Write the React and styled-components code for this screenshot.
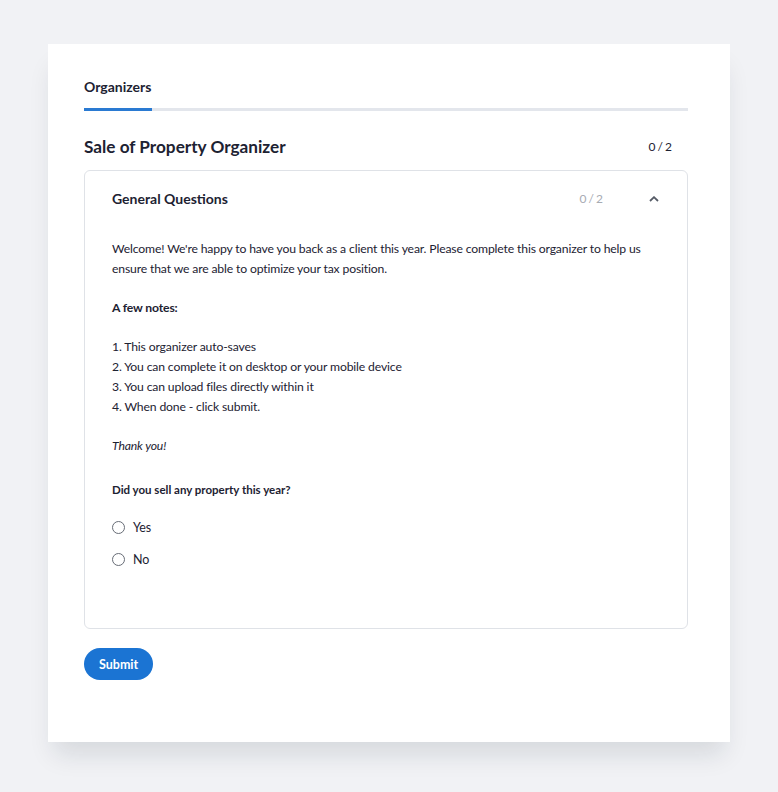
import React, { useState } from "react";
import styled, { createGlobalStyle } from "styled-components";

const Global = createGlobalStyle`
  body {
    margin: 0;
    background: #f1f2f5;
    font-family: "Lato", "Noto Sans", sans-serif;
    color: #1d2232;
  }
`;

const Page = styled.div`
  padding: 44px 48px 51px 48px;
`;

const Sheet = styled.div`
  background: #fff;
  padding: 34px 42px 62px 36px;
  box-shadow: 0 18px 24px -6px rgba(20, 30, 50, 0.12);
`;

const Tabs = styled.div`
  display: flex;
  border-bottom: 3px solid #e3e6ec;
`;

const Tab = styled.div`
  font-size: 14px;
  font-weight: 700;
  padding: 0 0 13px;
  width: 68px;
  margin-bottom: -3px;
  border-bottom: 3px solid ${(p) => (p.active ? "#2a7ad2" : "transparent")};
`;

const TitleRow = styled.div`
  display: flex;
  align-items: center;
  justify-content: space-between;
  margin-top: 25px;
  padding-right: 16px;
`;

const Title = styled.h1`
  margin: 0;
  font-size: 17.2px;
  font-weight: 700;
`;

const Count = styled.span`
  font-size: 12px;
  color: ${(p) => (p.muted ? "#a7abb3" : "#1d2232")};
  word-spacing: -1px;
`;

const Panel = styled.div`
  margin-top: 13px;
  border: 1px solid #dfe2e7;
  border-radius: 6px;
  padding: 0 28px 59px 27px;
`;

const PanelHead = styled.div`
  display: flex;
  align-items: center;
  height: 55px;
`;

const PanelTitle = styled.div`
  flex: 1;
  font-size: 14px;
  font-weight: 700;
`;

const Chevron = styled.span`
  display: inline-flex;
  margin-left: 46px;
  color: #555b66;
`;

const Body = styled.div`
  font-size: 12.2px;
  letter-spacing: -0.15px;
  line-height: 19.7px;
  padding-top: 13px;
  p {
    margin: 0 0 19.7px;
  }
`;

const Question = styled.div`
  font-size: 11.5px;
  letter-spacing: 0;
  font-weight: 700;
  margin-top: 24px;
`;

const Options = styled.div`
  display: flex;
  flex-direction: column;
  gap: 12px;
  margin-top: 18px;
`;

const Option = styled.label`
  display: flex;
  align-items: center;
  gap: 8px;
  font-size: 12.5px;
  height: 20px;
`;

const Radio = styled.span`
  width: 11px;
  height: 11px;
  border: 1.8px solid #676c76;
  border-radius: 50%;
`;

const Submit = styled.button`
  margin-top: 19px;
  background: #1b74d3;
  color: #fff;
  border: 0;
  border-radius: 16px;
  height: 32px;
  padding: 0 15px;
  font-family: inherit;
  font-size: 12.5px;
  font-weight: 700;
`;

export default function App() {
  const [open] = useState(true);
  return (
    <>
      <Global />
      <Page>
        <Sheet>
          <Tabs>
            <Tab active>Organizers</Tab>
          </Tabs>
          <TitleRow>
            <Title>Sale of Property Organizer</Title>
            <Count>0 / 2</Count>
          </TitleRow>
          <Panel>
            <PanelHead>
              <PanelTitle>General Questions</PanelTitle>
              <Count muted>0 / 2</Count>
              <Chevron>
                <svg width="10" height="6" viewBox="0 0 10 6" fill="none">
                  <path d="M1 5 L5 1.2 L9 5" stroke="currentColor" strokeWidth="1.8" />
                </svg>
              </Chevron>
            </PanelHead>
            {open && (
              <Body>
                <p>
                  Welcome! We're happy to have you back as a client this year. Please complete this organizer to help us
                  ensure that we are able to optimize your tax position.
                </p>
                <p>
                  <b>A few notes:</b>
                </p>
                <p>
                  1. This organizer auto-saves
                  <br />
                  2. You can complete it on desktop or your mobile device
                  <br />
                  3. You can upload files directly within it
                  <br />
                  4. When done - click submit.
                </p>
                <p>
                  <i>Thank you!</i>
                </p>
                <Question>Did you sell any property this year?</Question>
                <Options>
                  <Option>
                    <Radio />
                    Yes
                  </Option>
                  <Option>
                    <Radio />
                    No
                  </Option>
                </Options>
              </Body>
            )}
          </Panel>
          <Submit>Submit</Submit>
        </Sheet>
      </Page>
    </>
  );
}
